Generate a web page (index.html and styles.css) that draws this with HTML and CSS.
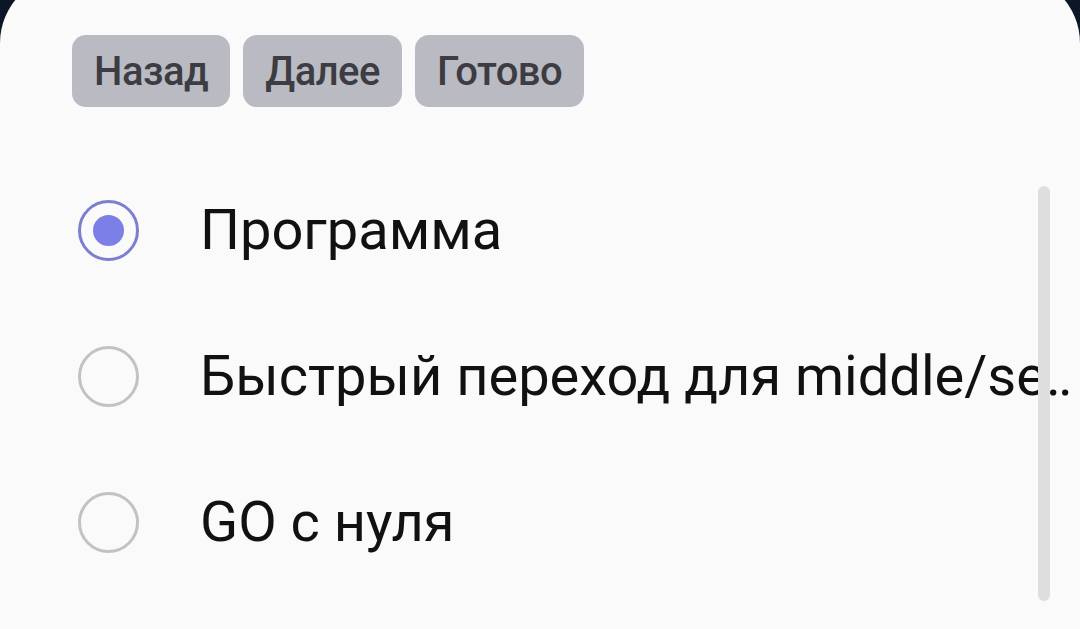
FILE: index.html
```html
<!DOCTYPE html>
<html lang="ru">
<head>
  <meta charset="UTF-8">
  <title>Выбор курса</title>
  <link rel="stylesheet" href="styles.css">
</head>
<body>

<div class="sheet">
  <div class="toolbar">
    <button class="chip">Назад</button>
    <button class="chip">Далее</button>
    <button class="chip">Готово</button>
  </div>

  <div class="list">
    <label class="row">
      <input type="radio" name="course" checked>
      <span class="radio"></span>
      <span class="label">Программа</span>
    </label>
    <label class="row">
      <input type="radio" name="course">
      <span class="radio"></span>
      <span class="label">Быстрый переход для middle/senior разработчиков</span>
    </label>
    <label class="row">
      <input type="radio" name="course">
      <span class="radio"></span>
      <span class="label">GO с нуля</span>
    </label>
    <div class="scrollbar"></div>
  </div>
</div>

</body>
</html>
```

FILE: styles.css
```css
html, body { margin: 0; height: 100%; overflow: hidden; }
body { background: #0b1627; font-family: Roboto, "Noto Sans", sans-serif; }

.sheet {
  margin-top: -25px;
  height: 660px;
  background: #fafafa;
  border-radius: 68px 68px 0 0;
}

.toolbar { display: flex; gap: 13px; padding: 60px 0 0 72px; }
.chip {
  height: 72px; padding: 0 22px;
  background: #b9bac2; color: #3c3c42;
  border: 0; border-radius: 14px;
  font-family: Roboto, sans-serif; font-weight: 500; font-size: 40px; letter-spacing: -0.5px;
}

.list { position: relative; margin-top: 50px; padding-right: 8px; }
.row { display: flex; align-items: center; height: 146px; padding-left: 78px; overflow: hidden; }
.row input { display: none; }
.radio {
  flex: none; box-sizing: border-box;
  width: 61px; height: 61px; border-radius: 50%;
  border: 3px solid #c2c2c2; position: relative;
}
.row input:checked + .radio { border-color: #7c7fcf; }
.row input:checked + .radio::after {
  content: ""; position: absolute; left: 12px; top: 12px;
  width: 31px; height: 31px; border-radius: 50%; background: #7b7fe6;
}
.label {
  margin: 0 -30px 0 61px; color: #111;
  font-size: 56px; white-space: nowrap; overflow: hidden; text-overflow: ellipsis;
}

.scrollbar {
  position: absolute; right: 30px; top: 29px;
  width: 12px; height: 415px; border-radius: 6px; background: #dedede;
}
```
